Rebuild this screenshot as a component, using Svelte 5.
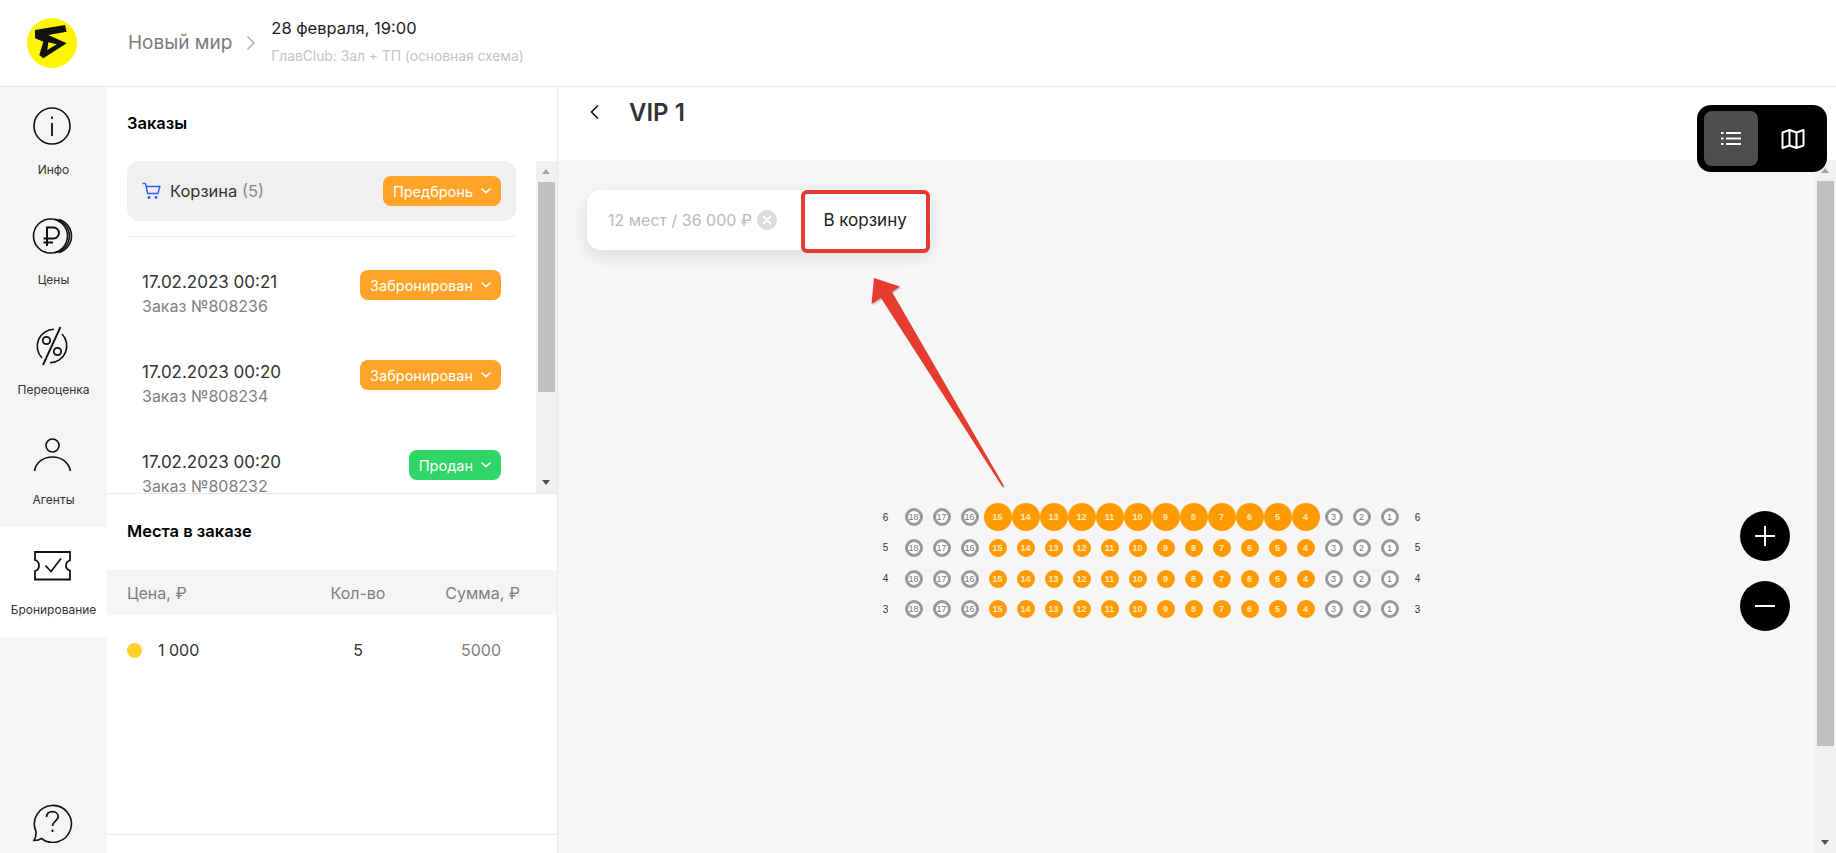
<script lang="ts">
  const orders = [
    { date: "17.02.2023 00:21", num: "Заказ №808236", status: "Забронирован", cls: "orange" },
    { date: "17.02.2023 00:20", num: "Заказ №808234", status: "Забронирован", cls: "orange" },
    { date: "17.02.2023 00:20", num: "Заказ №808232", status: "Продан", cls: "green" }
  ];

  const rows = [6, 5, 4, 3];
  const seats = Array.from({ length: 18 }, (_, i) => 18 - i);

  function seatClass(row: number, seat: number) {
    if (seat > 15 || seat < 4) return "seat free";
    return row === 6 ? "seat taken big" : "seat taken";
  }
</script>

{#snippet chevron()}
  <svg class="pill-arrow" width="10" height="6" viewBox="0 0 10 6" fill="none" stroke="#fff" stroke-width="1.6" stroke-linecap="round" stroke-linejoin="round">
    <path d="M1 1l4 3.6L9 1"/>
  </svg>
{/snippet}

{#snippet scrollbar(thumb: number)}
  <div class="scrollbar">
    <div class="sb-up"></div>
    <div class="sb-thumb" style="height: {thumb}px"></div>
    <div class="sb-rest"></div>
    <div class="sb-down"></div>
  </div>
{/snippet}

<div class="page">
  <header class="topbar">
    <div class="logo">
      <svg width="50" height="50" viewBox="0 0 50 50">
        <circle cx="25" cy="25" r="25" fill="#fff500"/>
        <path d="M8 12L38 7l1.700 6.700L21.300 17l18.400 8.300L16.300 40.300 12.300 37l4-13.300L8 20.300z" fill="#111"/>
        <path d="M21.300 24.300l-1 7.700 9.400-5.700z" fill="#fff500"/>
      </svg>
    </div>
    <span class="show-name">Новый мир</span>
    <svg class="crumb" width="10" height="16" viewBox="0 0 10 16" fill="none" stroke="#aaa" stroke-width="1.4">
      <path d="M1.500 1.500L8 8l-6.500 6.500"/>
    </svg>
    <div class="show-info">
      <div class="show-date">28 февраля, 19:00</div>
      <div class="show-hall">ГлавClub: Зал + ТП (основная схема)</div>
    </div>
  </header>

  <div class="content">
    <nav class="sidenav">
      <div class="nav-item">
        <svg width="42" height="42" viewBox="0 0 42 42" fill="none" stroke="#111" stroke-width="1.6">
          <circle cx="21" cy="21" r="18"/>
          <path d="M21 18v13" stroke-width="1.8"/>
          <path d="M21 11.500v2.500" stroke-width="1.8"/>
        </svg>
        <span>Инфо</span>
      </div>
      <div class="nav-item">
        <svg width="42" height="42" viewBox="0 0 42 42" fill="none" stroke="#111" stroke-width="1.6">
          <circle cx="19.500" cy="21" r="17"/>
          <path d="M24 4.200a17 17 0 010 33.600"/>
          <path d="M28 4.600a17 17 0 010 32.800"/>
          <path d="M16 31V12.500h6.500a5.500 5.500 0 010 11H12.500M12.500 27.500h9.500" stroke-width="2"/>
        </svg>
        <span>Цены</span>
      </div>
      <div class="nav-item">
        <svg width="42" height="42" viewBox="0 0 42 42" fill="none" stroke="#111" stroke-width="1.6">
          <path d="M11 33A17 17 0 0 1 23 4.200"/>
          <path d="M31 9A17 17 0 0 1 19 37.800"/>
          <path d="M29.500 2L12 40" stroke-width="1.800"/>
          <circle cx="15.500" cy="15.500" r="3.700" stroke-width="1.800"/>
          <circle cx="26.500" cy="26.500" r="3.700" stroke-width="1.800"/>
        </svg>
        <span>Переоценка</span>
      </div>
      <div class="nav-item">
        <svg width="42" height="42" viewBox="0 0 42 42" fill="none" stroke="#111" stroke-width="1.6">
          <circle cx="21.500" cy="10.500" r="6.500"/>
          <path d="M3.500 36c1.500-9 9-14 18-14s16 5 18 14"/>
        </svg>
        <span>Агенты</span>
      </div>
      <div class="nav-item active">
        <svg width="42" height="42" viewBox="0 0 42 42" fill="none" stroke="#111" stroke-width="1.8">
          <path d="M4 7h35v8.500c-3 .8-4 2.500-4 5s1 4.200 4 5V34.500H4V26c3-.8 4-2.700 4-5.500S7 15.800 4 15z"/>
          <path d="M14.500 20.500l5.500 6 10-13" stroke-width="1.700"/>
        </svg>
        <span>Бронирование</span>
      </div>
      <div class="nav-help">
        <svg width="42" height="42" viewBox="0 0 42 42" fill="none" stroke="#111" stroke-width="1.6">
          <path d="M3 39.500c3 0 5.500-.5 7.500-2A18.500 18.500 0 1 0 5 30.500c.3 3.500-.5 6.500-2 9z"/>
          <path d="M15.500 16c.3-3.300 2.800-5.300 6-5.300 3.300 0 5.700 2 5.700 4.900 0 4.500-5.700 4.600-5.700 9.400" stroke-width="1.800"/>
          <path d="M21.500 28.500v2.500" stroke-width="1.800"/>
        </svg>
      </div>
    </nav>

    <aside class="orders-panel">
      <section class="orders">
        <h2 class="panel-title">Заказы</h2>
        <div class="orders-scroll">
          <div class="orders-list">
            <div class="cart-row">
              <svg width="19" height="18" viewBox="0 0 19 18" fill="none" stroke="#2a5cff" stroke-width="1.400">
                <path d="M.5 1.500h3l2.200 10h10.200l2-7H4.500"/>
                <circle cx="7" cy="15.500" r="1.400" fill="#2a5cff" stroke="none"/>
                <circle cx="14" cy="15.500" r="1.400" fill="#2a5cff" stroke="none"/>
              </svg>
              <span class="cart-label">Корзина <span class="cart-count">(5)</span></span>
              <button class="pill orange">Предбронь {@render chevron()}</button>
            </div>
            <div class="cart-divider"></div>
            {#each orders as order}
              <div class="order-row">
                <div class="order-text">
                  <div class="order-date">{order.date}</div>
                  <div class="order-num">{order.num}</div>
                </div>
                <button class="pill {order.cls}">{order.status} {@render chevron()}</button>
              </div>
            {/each}
          </div>
          {@render scrollbar(210)}
        </div>
      </section>

      <section class="places">
        <h2 class="panel-title places-title">Места в заказе</h2>
        <div class="places-head">
          <span class="col-price">Цена, ₽</span>
          <span class="col-qty">Кол-во</span>
          <span class="col-sum">Сумма, ₽</span>
        </div>
        <div class="places-row">
          <span class="col-price"><i class="dot"></i>1 000</span>
          <span class="col-qty qty-val">5</span>
          <span class="col-sum sum-val">5000</span>
        </div>
      </section>
      <div class="panel-foot"></div>
    </aside>

    <main class="hall">
      <div class="hall-head">
        <svg width="11" height="16" viewBox="0 0 11 16" fill="none" stroke="#111" stroke-width="1.600">
          <path d="M9 1.500L2.500 8 9 14.500"/>
        </svg>
        <h1 class="hall-title">VIP 1</h1>
      </div>

      <div class="hall-body">
        <div class="canvas">
          <div class="selection">
            <span class="sel-text">12 мест / 36 000 ₽</span>
            <span class="sel-clear">
              <svg width="10" height="10" viewBox="0 0 10 10" stroke="#fff" stroke-width="1.800" stroke-linecap="round">
                <path d="M1.500 1.500l7 7M8.500 1.500l-7 7"/>
              </svg>
            </span>
            <button class="to-cart">В корзину</button>
          </div>

          <div class="seatmap">
            {#each rows as row}
              <span class="row-label">{row}</span>
              {#each seats as seat}
                <span class="seat-cell"><span class={seatClass(row, seat)}>{seat}</span></span>
              {/each}
              <span class="row-label">{row}</span>
            {/each}
          </div>
        </div>
        {@render scrollbar(565)}
      </div>

      <div class="view-toggle">
        <button class="toggle-btn on" aria-label="Список">
          <svg width="20" height="15" viewBox="0 0 20 15" fill="none" stroke="#fff" stroke-width="2">
            <path d="M5 2h15M5 7.500h15M5 13h15M0 2h2.500M0 7.500h2.500M0 13h2.500"/>
          </svg>
        </button>
        <button class="toggle-btn" aria-label="Карта">
          <svg width="24" height="22" viewBox="0 0 24 22" fill="none" stroke="#fff" stroke-width="2" stroke-linejoin="round">
            <path d="M1.500 4.500l7-2.500 7 2.500 7-2.500v15.500l-7 2.500-7-2.500-7 2.500zM8.500 2v15.500M15.500 4.500V20"/>
          </svg>
        </button>
      </div>

      <div class="zoom-btns">
        <button class="zoom-btn" aria-label="Приблизить">
          <svg width="20" height="20" viewBox="0 0 20 20" stroke="#fff" stroke-width="2"><path d="M0 10h20M10 0v20"/></svg>
        </button>
        <button class="zoom-btn" aria-label="Отдалить">
          <svg width="20" height="20" viewBox="0 0 20 20" stroke="#fff" stroke-width="2"><path d="M0 10h20"/></svg>
        </button>
      </div>
    </main>
  </div>

  <!-- annotation painted over the screenshot -->
  <div class="mark-box"></div>
  <svg class="mark-arrow" width="1836" height="853" viewBox="0 0 1836 853">
    <path d="M874 278l26 8.500-8 5.500L1004 486l-1.500 1L881 298l-9.500 6z" fill="#b9b9b9" transform="translate(1 1.500)" opacity=".7"/>
    <path d="M874 278l26 8.500-8 5.500L1004 486l-1.500 1L881 298l-9.500 6z" fill="#e63c30"/>
  </svg>
</div>

<style>
  :global(body) {
    margin: 0;
    background: #fff;
  }
  .page {
    position: relative;
    width: 1836px;
    height: 853px;
    overflow: hidden;
    display: flex;
    flex-direction: column;
    font-family: Inter, Roboto, sans-serif;
    color: #222;
  }
  button {
    font-family: inherit;
    border: none;
    padding: 0;
    cursor: pointer;
  }

  /* top bar */
  .topbar {
    height: 87px;
    flex: none;
    box-sizing: border-box;
    display: flex;
    align-items: center;
    border-bottom: 1px solid #e9e9e9;
  }
  .logo {
    width: 103px;
    display: flex;
    justify-content: center;
  }
  .logo svg {
    display: block;
  }
  .show-name {
    margin-left: 25px;
    margin-top: -2px;
    font-size: 19px;
    color: #7a7a7a;
  }
  .crumb {
    margin: 0 15px 0 14px;
  }
  .show-info {
    display: flex;
    flex-direction: column;
    gap: 10px;
    margin-top: -4px;
  }
  .show-date {
    font-size: 16.500px;
    line-height: 20px;
    color: #1d1d1d;
  }
  .show-hall {
    font-size: 13.800px;
    line-height: 16px;
    color: #c4c4c4;
  }

  .content {
    flex: 1;
    display: flex;
    min-height: 0;
  }

  /* left nav */
  .sidenav {
    width: 107px;
    flex: none;
    background: #f5f5f5;
    display: flex;
    flex-direction: column;
  }
  .nav-item {
    height: 110px;
    flex: none;
    box-sizing: border-box;
    padding-top: 18px;
    display: flex;
    flex-direction: column;
    align-items: center;
    gap: 15px;
    font-size: 12px;
    line-height: 15px;
    color: #333;
  }
  .nav-item svg {
    margin-left: -3px;
  }
  .nav-item.active {
    background: #fff;
  }
  .nav-help {
    margin-top: auto;
    padding-bottom: 10px;
    display: flex;
    justify-content: center;
    padding-right: 3px;
  }

  /* orders panel */
  .orders-panel {
    width: 451px;
    flex: none;
    box-sizing: border-box;
    border-right: 1px solid #e9e9e9;
    display: flex;
    flex-direction: column;
  }
  .orders {
    height: 407px;
    flex: none;
    box-sizing: border-box;
    border-bottom: 1px solid #e9e9e9;
    display: flex;
    flex-direction: column;
    overflow: hidden;
  }
  .panel-title {
    margin: 0;
    font-size: 16.500px;
    font-weight: 600;
    line-height: 20px;
    color: #000;
    padding-left: 20px;
  }
  .orders .panel-title {
    height: 74px;
    box-sizing: border-box;
    padding-top: 26px;
    flex: none;
  }
  .orders-scroll {
    flex: 1;
    min-height: 0;
    display: flex;
  }
  .orders-list {
    flex: 1;
    min-width: 0;
    box-sizing: border-box;
    padding: 0 20px;
    overflow: hidden;
  }
  .cart-row {
    height: 60px;
    box-sizing: border-box;
    padding: 0 15px;
    background: #f0f0f0;
    border-radius: 12px;
    display: flex;
    align-items: center;
  }
  .cart-label {
    margin-left: 9px;
    margin-right: auto;
    font-size: 16.500px;
    color: #333;
  }
  .cart-count {
    color: #888;
  }
  .cart-divider {
    height: 1px;
    background: #ececec;
    margin: 15px 0 0;
  }
  .pill {
    height: 30px;
    box-sizing: border-box;
    padding: 0 10px;
    border-radius: 8px;
    display: inline-flex;
    align-items: center;
    gap: 8px;
    font-size: 14.500px;
    color: #fff;
    white-space: nowrap;
  }
  .pill.orange {
    background: #ffa428;
  }
  .pill.green {
    background: #2fd566;
  }
  .pill-arrow {
    display: block;
  }
  .order-row {
    height: 90px;
    box-sizing: border-box;
    padding: 0 15px;
    display: flex;
    justify-content: space-between;
    align-items: flex-start;
  }
  .cart-divider + .order-row {
    margin-top: 33px;
  }
  .order-text {
    margin-top: 2px;
  }
  .order-date {
    font-size: 17px;
    line-height: 20px;
    color: #333;
  }
  .order-num {
    margin-top: 4px;
    font-size: 16px;
    line-height: 20px;
    color: #7f7f7f;
  }

  /* fake scrollbars, same look in every headless run */
  .scrollbar {
    width: 21px;
    flex: none;
    box-sizing: border-box;
    padding: 0 2px;
    background: #f1f1f1;
    display: flex;
    flex-direction: column;
    align-items: stretch;
  }
  .sb-up,
  .sb-down {
    height: 21px;
    flex: none;
    position: relative;
  }
  .sb-up::after,
  .sb-down::after {
    content: "";
    position: absolute;
    left: 4px;
    top: 8px;
    border-left: 4.500px solid transparent;
    border-right: 4.500px solid transparent;
  }
  .sb-up::after {
    border-bottom: 5px solid #a3a3a3;
  }
  .sb-down::after {
    border-top: 5px solid #505050;
  }
  .sb-thumb {
    background: #c1c1c1;
    flex: none;
  }
  .sb-rest {
    flex: 1;
  }

  /* seats in order */
  .places-title {
    height: 76px;
    box-sizing: border-box;
    padding-top: 27px;
  }
  .places-head,
  .places-row {
    display: grid;
    grid-template-columns: 160px 142px 1fr;
    padding: 0 37px 0 20px;
    align-items: center;
    font-size: 16px;
  }
  .places-head {
    height: 45px;
    background: #f5f5f5;
    color: #7f7f7f;
  }
  .places-row {
    height: 70px;
    padding-right: 56px;
    color: #333;
  }
  .places {
    flex: 1;
  }
  .col-qty {
    text-align: center;
  }
  .col-sum {
    text-align: right;
  }
  .col-price {
    display: flex;
    align-items: center;
  }
  .dot {
    width: 15px;
    height: 15px;
    border-radius: 50%;
    background: #ffcf2e;
    margin-right: 16px;
  }
  .sum-val {
    color: #7f7f7f;
  }
  .panel-foot {
    height: 18px;
    flex: none;
    border-top: 1px solid #e9e9e9;
  }

  /* hall */
  .hall {
    flex: 1;
    min-width: 0;
    position: relative;
    display: flex;
    flex-direction: column;
  }
  .hall-head {
    height: 73px;
    flex: none;
    box-sizing: border-box;
    padding: 0 0 23px 31px;
    display: flex;
    align-items: center;
    gap: 29px;
  }
  .hall-title {
    margin: 0;
    font-size: 24px;
    font-weight: 600;
    color: #333;
  }
  .hall-body {
    flex: 1;
    min-height: 0;
    display: flex;
  }
  .canvas {
    flex: 1;
    min-width: 0;
    box-sizing: border-box;
    padding: 30px 0 0 29px;
    background: #f6f6f6;
  }
  .selection {
    width: fit-content;
    height: 60px;
    background: #fff;
    border-radius: 14px;
    box-shadow: 0 6px 18px rgba(0, 0, 0, 0.1);
    display: flex;
    align-items: center;
    padding-left: 21px;
  }
  .sel-text {
    font-size: 16px;
    color: #b9b9b9;
  }
  .sel-clear {
    width: 20px;
    height: 20px;
    margin-left: 5px;
    border-radius: 50%;
    background: #dcdcdc;
    display: flex;
    align-items: center;
    justify-content: center;
  }
  .to-cart {
    width: 128px;
    height: 60px;
    margin-left: 26px;
    padding-right: 4px;
    background: #fff;
    border-radius: 0 14px 14px 0;
    font-size: 17px;
    color: #222;
  }
  .seatmap {
    margin: 252px 0 0 284.500px;
    display: grid;
    grid-template-columns: repeat(20, 28px);
    grid-auto-rows: 30.670px;
    width: 560px;
    font-family: "Liberation Sans", Arial, sans-serif;
  }
  .row-label {
    display: flex;
    align-items: center;
    justify-content: center;
    font-size: 10px;
    color: #333;
  }
  .seat-cell {
    display: flex;
    align-items: center;
    justify-content: center;
  }
  .seat {
    width: 18px;
    height: 18px;
    border-radius: 50%;
    box-sizing: border-box;
    display: flex;
    align-items: center;
    justify-content: center;
    font-size: 9px;
    flex: none;
  }
  .seat.free {
    background: #fff;
    border: 3px solid #999;
    color: #777;
  }
  .seat.taken {
    background: #ff9b00;
    color: #ffe9c4;
    font-weight: 700;
  }
  .seat.big {
    width: 28px;
    height: 28px;
  }

  .view-toggle {
    position: absolute;
    top: 18px;
    right: 9px;
    width: 130px;
    height: 67px;
    box-sizing: border-box;
    padding: 6px 7px;
    background: #000;
    border-radius: 14px;
    display: flex;
    gap: 8px;
  }
  .toggle-btn {
    width: 54px;
    height: 55px;
    background: transparent;
    border-radius: 8px;
    display: flex;
    align-items: center;
    justify-content: center;
  }
  .toggle-btn.on {
    background: #4d4d4d;
  }
  .zoom-btns {
    position: absolute;
    top: 424px;
    right: 46px;
    display: flex;
    flex-direction: column;
    gap: 20px;
  }
  .zoom-btn {
    width: 50px;
    height: 50px;
    border-radius: 50%;
    background: #000;
    display: flex;
    align-items: center;
    justify-content: center;
  }

  /* red annotation */
  .mark-box {
    position: absolute;
    left: 801px;
    top: 190px;
    width: 129px;
    height: 63px;
    box-sizing: border-box;
    border: 4px solid #e63c30;
    border-radius: 6px;
  }
  .mark-arrow {
    position: absolute;
    left: 0;
    top: 0;
    pointer-events: none;
  }
</style>
